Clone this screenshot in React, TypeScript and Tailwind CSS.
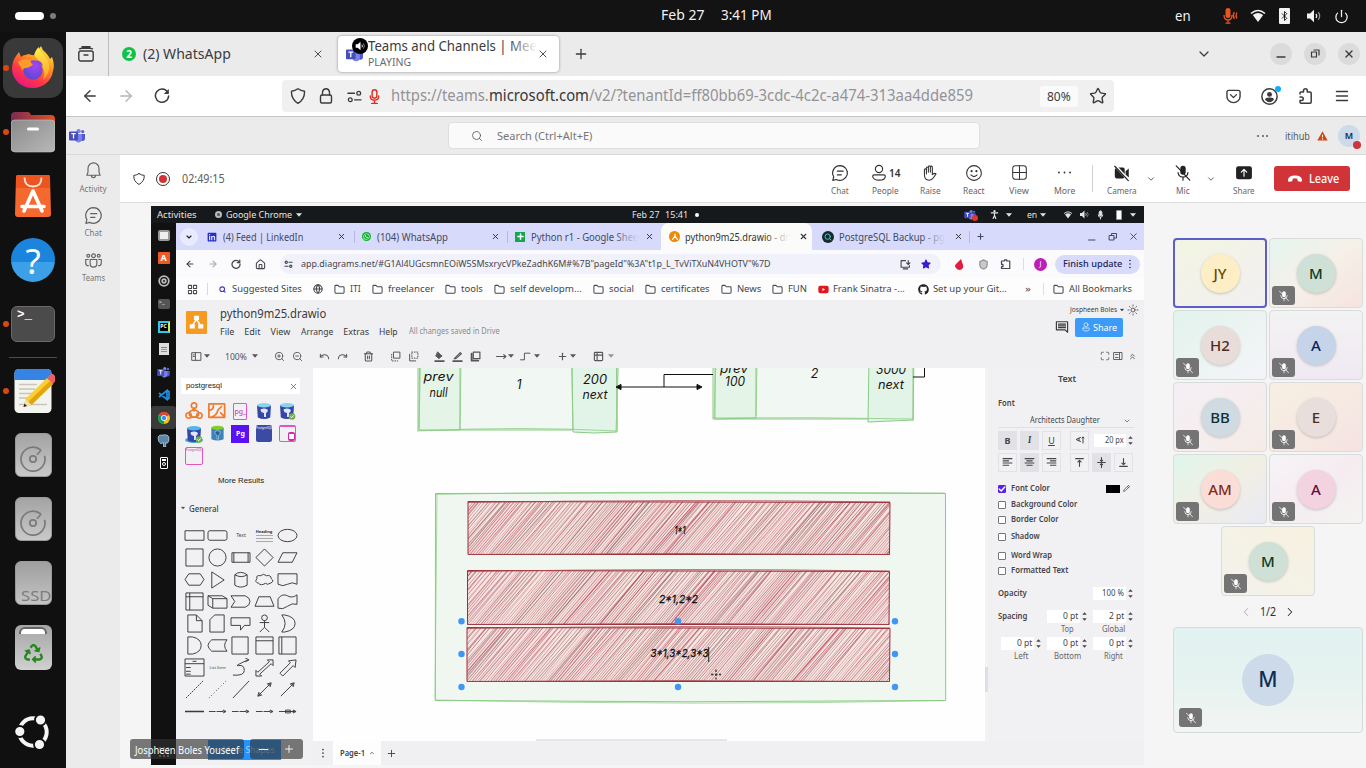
import { useLayoutEffect, useRef, useState, type ReactNode } from "react";
import { X, Plus, ChevronDown, ChevronLeft, ChevronRight, Search, ArrowLeft, ArrowRight, House, Folder, Star, Shield, Power, Bluetooth, Trash2, ZoomIn, ZoomOut, Undo, Redo, Sun, LayoutGrid, Table2, Maximize, ChevronsUp, Pencil, Globe } from "lucide-react";
import { FaLinkedin, FaWhatsapp, FaGithub, FaYoutube, FaRecycle, FaStar } from "react-icons/fa";

/* Text set to an exact width: the glyph run is condensed or widened to fill its box. */
function T({ children, className = "" }: { children: ReactNode; className?: string }) {
  const box = useRef<HTMLSpanElement>(null);
  const run = useRef<HTMLSpanElement>(null);
  const [k, setK] = useState(1);
  useLayoutEffect(() => {
    if (box.current && run.current && run.current.offsetWidth) {
      setK(box.current.getBoundingClientRect().width / run.current.offsetWidth);
    }
  }, []);
  return (
    <span ref={box} className={`block shrink-0 whitespace-nowrap leading-none ${className}`}>
      <span ref={run} className="inline-block origin-left" style={{ transform: `scaleX(${k})` }}>
        {children}
      </span>
    </span>
  );
}

function Ic({ d, className = "", vb = "0 0 20 20", sw = 1.3, children }: { d?: string; className?: string; vb?: string; sw?: number; children?: ReactNode }) {
  return (
    <svg viewBox={vb} className={`shrink-0 ${className}`} fill="none" stroke="currentColor" strokeWidth={sw} strokeLinecap="round" strokeLinejoin="round">
      {d && <path d={d} />}
      {children}
    </svg>
  );
}

function Tri({ className = "" }: { className?: string }) {
  return (
    <svg viewBox="0 0 6 4" className={`h-1 w-1.5 shrink-0 ${className}`}>
      <path d="M0 .3h6L3 3.8z" fill="currentColor" />
    </svg>
  );
}

function Wifi({ className = "" }: { className?: string }) {
  return (
    <svg viewBox="0 0 16 14" className={`shrink-0 ${className}`}>
      <path d="M1 4.5Q8-1.5 15 4.5" fill="none" stroke="currentColor" strokeWidth="1.6" />
      <path d="M2.8 6Q8 2 13.2 6L8 13z" fill="currentColor" />
    </svg>
  );
}

function Speaker({ className = "" }: { className?: string }) {
  return (
    <svg viewBox="0 0 16 14" className={`shrink-0 ${className}`} fill="none" stroke="currentColor">
      <path d="M1 4.5h3L8 .8v12.4L4 9.5H1z" fill="currentColor" stroke="none" />
      <path d="M10 5q1.5 2 0 4" strokeWidth="1.3" />
      <path d="M12.2 3.2q3 3.8 0 7.6" strokeWidth="1.2" opacity=".6" />
    </svg>
  );
}

function TeamsLogo({ className = "" }: { className?: string }) {
  return (
    <svg viewBox="0 0 16 14" className={`shrink-0 ${className}`}>
      <circle cx="13.7" cy="2.6" r="1.6" fill="#5b63cf" />
      <path d="M11 5h5v4.6a2.4 2.4 0 0 1-4 1.8z" fill="#5059c9" />
      <circle cx="9.6" cy="2.2" r="2.1" fill="#7b83eb" />
      <path d="M6 5h7v5a3.6 3.6 0 0 1-7 1z" fill="#7b83eb" />
      <rect y="2.4" width="9" height="9" rx=".8" fill="#464ebb" />
      <path d="M2.3 4.7h4.4M4.5 4.7v4.8" stroke="#fff" strokeWidth="1.2" />
    </svg>
  );
}

function Dock({ dot, children }: { dot?: boolean; children: ReactNode }) {
  return (
    <div className="flex h-16 w-full shrink-0 items-center">
      <span className={`z-10 ml-[2.5px] size-1.5 shrink-0 rounded-full ${dot ? "bg-[#d9480f]" : ""}`} />
      <div className="-ml-[8.5px] flex flex-1 justify-center">{children}</div>
    </div>
  );
}

function Firefox() {
  return (
    <svg viewBox="0 0 44 44" className="size-11">
      <defs>
        <linearGradient id="fx" x1=".85" y1="0" x2=".25" y2="1">
          <stop offset="0" stopColor="#fff44f" />
          <stop offset=".35" stopColor="#ff9a1f" />
          <stop offset=".7" stopColor="#ff3647" />
          <stop offset="1" stopColor="#e31587" />
        </linearGradient>
        <radialGradient id="fp" cx=".6" cy=".3" r=".7">
          <stop offset="0" stopColor="#a545f5" />
          <stop offset="1" stopColor="#5a49cf" />
        </radialGradient>
        <linearGradient id="fy" x1="0" y1="0" x2="0" y2="1">
          <stop offset="0" stopColor="#fff04e" />
          <stop offset="1" stopColor="#ff9f22" />
        </linearGradient>
      </defs>
      <path d="M5 10l3-4 2 5q2-2 4-2l4-1q4 2 8 1 1-5 4-9 1 4 5 7 2 2 4 6l2-2q3 8 1 14a20 20 0 0 1-20 17A20 20 0 0 1 1 24Q1 15 5 10z" fill="url(#fx)" />
      <path d="M23 9q2-6 5-8 1 5 5 8 4 5 5 9 1 10-6 16 3-8-1-14-3-6-8-11z" fill="url(#fy)" />
      <circle cx="22" cy="24" r="9.7" fill="url(#fp)" />
      <path d="M7 16q6-5 13-2-1 3 2 4-2 3-7 4-3 0-4 3-1-4-4-9z" fill="#ff9a2a" />
      <path d="M22 15q8-2 10 5-4-3-7-3z" fill="#8846e2" />
    </svg>
  );
}

function Drive() {
  return (
    <div className="flex h-[44px] w-[37px] items-center justify-center rounded-md border border-[#9a9a9a] bg-linear-to-b from-[#a3a3a3] to-[#c9c9c9] pt-2">
      <svg viewBox="0 0 28 28" className="size-7" fill="none" stroke="#7a7a7a" strokeWidth="1.7">
        <path d="M22 5.2A12 12 0 1 0 25.5 10.7" />
        <path d="M22 5.2l-4 4.5" />
        <circle cx="14" cy="14" r="3.2" />
      </svg>
    </div>
  );
}

function DesktopDock() {
  return (
    <nav className="flex h-full w-[66px] shrink-0 flex-col bg-[#101010] pt-1">
      <Dock dot>
        <div className="flex size-[60px] items-center justify-center rounded-[13px] bg-[#393939]">
          <Firefox />
        </div>
      </Dock>
      <Dock dot>
        <svg viewBox="0 0 44 42" className="h-[42px] w-11">
          <defs>
            <linearGradient id="fo" x1="0" x2="1"><stop stopColor="#7c2a55" /><stop offset="1" stopColor="#e2521f" /></linearGradient>
            <linearGradient id="fg" x1="0" y1="0" x2="1" y2="1"><stop stopColor="#8a8a8a" /><stop offset="1" stopColor="#b8b8b8" /></linearGradient>
          </defs>
          <path d="M0 5Q0 1 4 1h13q2 0 3 3h20q4 0 4 4v12H0z" fill="url(#fo)" />
          <rect y="9" width="44" height="32" rx="4" fill="url(#fg)" stroke="#c4c4c4" strokeWidth=".6" />
          <rect x="16" y="16.5" width="12" height="3" rx="1.5" fill="#fff" />
        </svg>
      </Dock>
      <Dock>
        <svg viewBox="0 0 36 43" className="h-[43px] w-9">
          <path d="M3 0h30q2 0 2 2l1 37q0 3-3 3H3q-3 0-3-3L1 2Q1 0 3 0z" fill="#f5692f" />
          <path d="M3 0h30q2 0 2 2v11H1V2Q1 0 3 0z" fill="#ec5420" />
          <path d="M9.5 2.5q0 9 8.5 9t8.5-9" fill="none" stroke="#ffe3d6" strokeWidth="1.8" />
          <path d="M9 36L18 16l9 20M7 31.5h22" fill="none" stroke="#fff" strokeWidth="3.6" strokeLinecap="round" strokeLinejoin="round" />
        </svg>
      </Dock>
      <Dock>
        <div className="flex size-[44px] items-center justify-center rounded-full bg-linear-to-b from-[#1b84dc] from-55% to-[#3ba0e8] to-55%">
          <span className="text-[35px] leading-none text-white">?</span>
        </div>
      </Dock>
      <Dock dot>
        <div className="h-9 w-[44px] rounded-md border border-[#6a6a6a] bg-[#4b4b4b] pt-px pl-[5px] font-[Liberation_Mono] text-[12.5px] leading-[15px] font-bold text-white">&gt;_</div>
      </Dock>
      <div className="mx-auto mt-px mb-px h-px w-12 shrink-0 bg-[#4c4c4c]" />
      <Dock dot>
        <svg viewBox="0 0 44 46" className="h-[46px] w-11">
          <rect x="3.5" y="1" width="37" height="44" rx="4.5" fill="#f3f3ef" />
          <path d="M3.5 12V5.5Q3.5 1 8 1h28q4.5 0 4.5 4.5V12z" fill="#3584e4" />
          <path d="M8 16.5h18M8 21h16M8 25.5h18M8 30h12M8 36.5h28" stroke="#c9c5b8" strokeWidth="1.5" />
          <path d="M12.5 39l2-8L36 10l6 6-21.5 21z" fill="#f8cf34" />
          <path d="M17 34L39 13l3 3-21.5 21z" fill="#e5a50a" />
          <path d="M36 10l2.5-2.5Q41 4 44 8q3 3 0 5.5L42 16z" fill="#ed5f64" />
          <path d="M12.5 39l2-8 6 6z" fill="#f2dfae" /><path d="M12.5 39l.9-3.5 2.6 2.5z" fill="#222" />
        </svg>
      </Dock>
      <Dock><Drive /></Dock>
      <Dock><Drive /></Dock>
      <Dock>
        <div className="flex h-[44px] w-[37px] items-end justify-end rounded-md border border-[#9a9a9a] bg-linear-to-b from-[#9f9f9f] to-[#c4c4c4] pb-px">
          <T className="w-[30px] text-[15px] text-[#7c7c7c]">SSD</T>
        </div>
      </Dock>
      <Dock>
        <div className="flex h-[45px] w-[37px] flex-col items-center rounded-md bg-linear-to-b from-[#a5a5a5] to-[#d0d0d0] pt-0.5">
          <div className="h-[7px] w-7 rounded-t-md border-2 border-b-0 border-[#666] bg-white" />
          <FaRecycle className="mt-2.5 size-[19px] text-[#26871f]" />
        </div>
      </Dock>
      <div className="mt-[21px]">
        <Dock>
          <svg viewBox="0 0 36 36" className="size-9" fill="none" stroke="#f5f5f5" strokeWidth="4">
            <circle cx="18" cy="18" r="13.7" />
            <g fill="#f5f5f5" stroke="#101010" strokeWidth="1.8">
              <circle cx="4.8" cy="17.5" r="5.5" /><circle cx="25.5" cy="6" r="5.5" /><circle cx="24.5" cy="30.5" r="5.5" />
            </g>
          </svg>
        </Dock>
      </div>
    </nav>
  );
}

function SystemBar() {
  return (
    <header className="flex h-8 shrink-0 items-center bg-[#131313] text-[14px] text-[#f2f2f2]">
      <span className="ml-[15px] h-2 w-[29px] rounded-full bg-white" />
      <span className="ml-1.5 size-1.5 rounded-full bg-[#7d7d7d]" />
      <T className="-mt-0.5 ml-[605px] w-[43px]">Feb 27</T>
      <T className="-mt-0.5 ml-[17px] w-[51px]">3:41 PM</T>
      <T className="ml-[403px] w-4">en</T>
      <svg viewBox="0 0 16 16" className="ml-[31px] size-4" fill="none" stroke="#e95420" strokeWidth="1.3">
        <rect x="3.5" y="0" width="5" height="10" rx="2.5" fill="#e95420" stroke="none" />
        <path d="M2 7q0 5 4 5t4-5M6 12v3M3.5 15.2h5M12.3 4q-2 3.5 0 7M14.8 4.5q-1.5 3 0 6" />
      </svg>
      <Wifi className="ml-[12px] h-[14px] w-4" />
      <span className="ml-[13px] flex h-4 w-[11px] items-center justify-center rounded-[1px] bg-[#f2f2f2] text-black"><Bluetooth className="size-[14px]" strokeWidth={1.8} /></span>
      <Speaker className="ml-[16px] h-[14px] w-4" />
      <Power className="ml-3 size-[15px]" strokeWidth={2} />
    </header>
  );
}

function FirefoxChrome() {
  return (
    <>
      <div className="flex h-11 shrink-0 items-center bg-[#ebebeb] text-[14px] text-[#3b3b3d]">
        <div className="flex h-full w-[43px] items-center justify-center border-r border-[#bdbdbd] pr-0.5">
          <Ic className="size-4" vb="0 0 16 16" sw={1.4}><rect x=".8" y="5" width="14.4" height="10" rx="2" /><path d="M1.5 2.8Q3 2.3 4 2.3h8q1 0 2.5.5M4 .7h8M6 9h4" /></Ic>
        </div>
        <div className="ml-[13px] flex size-[14px] items-center justify-center rounded-full bg-[#0fc144] text-[10px] leading-none font-bold text-white">2</div>
        <T className="-mt-px ml-[7px] w-[88px] text-[15px]">(2) WhatsApp</T>
        <X className="ml-[81px] size-3" strokeWidth={1.8} />
        <div className="ml-[14px] flex h-9 w-[221px] shrink-0 items-center rounded-[4px] bg-white pl-2 shadow-[0_0_3px_rgba(0,0,0,.4)]">
          <div className="relative flex h-full items-center">
            <TeamsLogo className="h-[15px] w-[17px]" />
            <span className="absolute top-[2px] left-[6px] flex size-4 items-center justify-center rounded-full bg-black text-white"><Speaker className="h-2.5 w-[11px]" /></span>
          </div>
          <div className="-mt-0.5 ml-[5px] flex w-[169px] flex-col gap-1 overflow-hidden">
            <div className="relative flex h-[15px] items-center"><T className="w-[169px] text-[15px]">Teams and Channels | Mee</T><span className="absolute inset-y-0 right-0 w-7 bg-linear-to-r from-transparent to-white" /></div>
            <T className="w-[43px] text-[10.5px] text-[#6b6b6e]">PLAYING</T>
          </div>
          <X className="size-3 shrink-0" strokeWidth={1.8} />
        </div>
        <Plus className="ml-[14px] size-4" strokeWidth={1.9} />
        <ChevronDown className="ml-[607px] size-4" strokeWidth={1.9} />
        <span className="ml-[58px] flex size-[22px] items-center justify-center rounded-full bg-[#dbdbdb]"><Ic className="size-3" vb="0 0 12 12" d="M2 9h8" /></span>
        <span className="ml-3 flex size-[22px] items-center justify-center rounded-full bg-[#dbdbdb]"><Ic className="size-3" vb="0 0 12 12" sw={1.2} d="M2.5 4h5v5h-5zM5 2h5v5" /></span>
        <span className="ml-3 flex size-[22px] items-center justify-center rounded-full bg-[#dbdbdb]"><X className="size-3" strokeWidth={2.8} /></span>
      </div>
      <div className="flex h-10 shrink-0 items-center bg-white text-[#3b3b3d]">
        <ArrowLeft className="ml-[15px] size-[18px]" strokeWidth={1.8} />
        <ArrowRight className="ml-[18px] size-[18px] text-[#b5b5b5]" strokeWidth={1.8} />
        <Ic className="ml-[19px] size-4" vb="0 0 16 16" sw={1.5} d="M13.6 4.2A6.6 6.6 0 1 0 14.6 8"><path d="M14.8 1v5h-5z" fill="currentColor" stroke="none" /></Ic>
        <div className="ml-[112px] flex h-8 w-[832px] items-center rounded-[4px] bg-[#f0f0f0]">
          <Ic className="ml-2 size-4" vb="0 0 16 16" sw={1.4} d="M8 .8Q11 3 14.5 3.2 15 11 8 15.3 1 11 1.5 3.2 5 3 8 .8z" />
          <Ic className="ml-3 size-4" vb="0 0 16 16" sw={1.4}><rect x="2.5" y="7" width="11" height="8" rx="1.5" /><path d="M4.5 7V4Q5 .8 8 .8t3.500 3.200v3" /></Ic>
          <Ic className="ml-[13px] size-[15px]" vb="0 0 16 16" sw={1.4}><circle cx="12.5" cy="4.5" r="2" /><circle cx="3.5" cy="11.5" r="2" /><path d="M1 4.5h7M8 11.5h7" /></Ic>
          <Ic className="ml-[5px] size-[15px] text-[#e12b20]" vb="0 0 16 16" sw={1.5}><rect x="5.5" y=".8" width="5" height="9" rx="2.5" /><path d="M3.5 7.5q0 4.5 4.5 4.5t4.5-4.5M8 12v3M5 15.300h6" /></Ic>
          <div className="-mt-0.5 ml-[9px] flex text-[16px] text-[#939397]">
            <T className="w-[98px]">https://teams.</T>
            <T className="w-[100px] text-[#37373a]">microsoft.com</T>
            <T className="w-[384px]">/v2/?tenantId=ff80bb69-3cdc-4c2c-a474-313aa4dde859</T>
          </div>
          <div className="ml-[67px] flex h-[21px] w-[38px] items-center justify-center rounded-[3px] bg-[#fafafa]"><T className="w-6 text-[13px]">80%</T></div>
          <Star className="ml-[11px] size-[18px]" strokeWidth={1.9} />
        </div>
        <Ic className="ml-[112px] size-[15px]" vb="0 0 16 16" sw={1.5} d="M3 1.5h10q2 0 2 2V8a7 6.5 0 0 1-14 0V3.5q0-2 2-2zM4.8 6L8 9.2 11.2 6" />
        <span className="relative ml-5">
          <Ic className="size-[17px]" vb="0 0 16 16" sw={1.4}><circle cx="8" cy="8" r="7.2" /><circle cx="8" cy="6" r="2.3" fill="currentColor" stroke="none" /><path d="M3.800 11Q4 9 8 9t4.200 2Q10 13.400 8 13.400T3.800 11z" fill="currentColor" stroke="none" /></Ic>
          <span className="absolute -top-[2px] -right-[3px] size-1.5 rounded-full bg-[#0ab0ff]" />
        </span>
        <Ic className="ml-5 size-4" vb="0 0 16 16" sw={1.5} d="M2 6V5q0-1 1-1h2.500V2.700a1.900 1.900 0 0 1 3.800 0V4H12q1.200 0 1.200 1.200V14q0 1.200-1.200 1.200H3.200Q2 15.200 2 14v-1.500h1.500a1.700 1.700 0 0 0 0-3.500H2" />
        <Ic className="ml-[21px] size-[14px]" vb="0 0 14 14" sw={1.5} d="M1.500 2.500h11M1.500 7h11M1.500 11.500h11" />
      </div>
    </>
  );
}

function TeamsHeader() {
  return (
    <div className="flex h-[39px] shrink-0 items-center border-t border-b border-t-[#c6c6c6] border-b-[#dadada] bg-[#ebebeb] text-[#5a5a5a]">
      <TeamsLogo className="ml-[3px] h-[14px] w-4" />
      <div className="ml-[363px] flex h-[27px] w-[532px] items-center rounded-[4px] border border-[#dedede] bg-[#fafafa]">
        <Search className="ml-[22px] size-3" strokeWidth={1.7} />
        <T className="ml-[14px] w-[95px] text-[11.5px] text-[#767676]">Search (Ctrl+Alt+E)</T>
      </div>
      <span className="ml-[277px] flex w-[11px] justify-between"><i className="size-[2px] rounded-full bg-current" /><i className="size-[2px] rounded-full bg-current" /><i className="size-[2px] rounded-full bg-current" /></span>
      <T className="ml-[17px] w-[25px] text-[11px]">itihub</T>
      <svg viewBox="0 0 12 11" className="ml-[7px] h-[10px] w-[11px]"><path d="M6 .3l5.7 10.2H.3z" fill="#cf4a12" /><path d="M6 4v3M6 8v1.3" stroke="#fff" strokeWidth="1.2" /></svg>
      <span className="relative ml-[10px] flex size-[22px] items-center justify-center rounded-full bg-[#cddaea] text-[9px] font-semibold text-[#13294b]">M<i className="absolute -right-px -bottom-[2px] size-2 rounded-full bg-[#d13438]" /></span>
    </div>
  );
}

function PeopleIcon({ className = "" }: { className?: string }) {
  return <Ic className={className}><circle cx="10" cy="5.5" r="4" /><path d="M4.5 12h11q1.500 0 1.500 1.500c0 6-14 6-14 0Q3 12 4.500 12z" /></Ic>;
}
function ChatIcon({ className = "" }: { className?: string }) {
  return <Ic className={className} d="M10 1.8A8.2 8.2 0 1 1 6 17.2L2 18.2l1-4A8.2 8.2 0 0 1 10 1.8zM7 8h6.5M7 12h4.5" />;
}

function Rail() {
  return (
    <aside className="flex w-[54px] shrink-0 flex-col items-center bg-[#ebebeb] text-[#616161]">
      <Ic className="mt-[6px] size-[19px]" sw={1.2} d="M10 2a5.800 5.800 0 0 0-5.800 5.800V12L3 15h14l-1.200-3V7.800A5.800 5.800 0 0 0 10 2zM7.800 15.300a2.200 2.200 0 0 0 4.400 0" />
      <T className="mt-[5px] w-[27px] text-[8px] text-[#777]">Activity</T>
      <ChatIcon className="mt-[13px] size-[19px]" />
      <T className="mt-[4px] w-[17px] text-[8px] text-[#777]">Chat</T>
      <Ic className="mt-[14px] size-[19px]" sw={1.2}><circle cx="10" cy="5" r="2" /><circle cx="4.5" cy="5" r="1.5" /><circle cx="15.5" cy="5" r="1.5" /><path d="M6.500 9h7v4.500a3.500 3.500 0 0 1-7 0zM4.500 9H1.800v3.500q0 3 3 3M15.500 9h2.700v3.500q0 3-3 3" /></Ic>
      <T className="mt-[4px] w-[23px] text-[8px] text-[#777]">Teams</T>
    </aside>
  );
}

function MicOff({ className = "" }: { className?: string }) {
  return (
    <Ic className={className} sw={1.3}>
      <rect x="7" y="2" width="6" height="10" rx="3" fill="currentColor" stroke="none" />
      <path d="M4.5 9.5q.5 5 5.5 5t5.500-5M10 14.500v3.500M2.500 2l15 16" />
    </Ic>
  );
}

function Tool({ icon, label, w, ml = "" }: { icon: ReactNode; label: string; w: string; ml?: string }) {
  return (
    <div className={`flex w-[38px] shrink-0 flex-col items-center gap-[4px] pt-[2px] ${ml}`}>
      <div className="flex h-[18px] items-center">{icon}</div>
      <T className={`text-[9.5px] text-[#666] ${w}`}>{label}</T>
    </div>
  );
}

function MeetingBar() {
  return (
    <div className="flex h-[48px] shrink-0 items-center border-b border-[#dcdcdc] bg-white text-[#333]">
      <Ic className="ml-[13px] size-3" vb="0 0 16 16" d="M8 .8Q11 3 15 3.2 15.500 11 8 15.300.500 11 1 3.200 5 3 8 .8z" />
      <span className="ml-[11px] flex size-[14px] items-center justify-center rounded-full border border-[#333]"><i className="size-2 rounded-full bg-[#d13438]" /></span>
      <T className="ml-[12px] w-[43px] text-[12px] text-[#606060]">02:49:15</T>
      <Tool ml="ml-[596px]" icon={<ChatIcon className="size-[18px]" />} label="Chat" w="w-[18px]" />
      <Tool ml="ml-[7px]" icon={<><PeopleIcon className="size-[18px]" /><T className="ml-px w-[11px] text-[10px] font-semibold">14</T></>} label="People" w="w-[27px]" />
      <Tool ml="ml-[7px]" icon={<Ic className="size-[18px]" sw={1.2} d="M6 11V4.500a1.100 1.100 0 0 1 2.200 0V9M8.200 9V3a1.100 1.100 0 0 1 2.200 0v6M10.400 9V3.500a1.100 1.100 0 0 1 2.200 0V10M6 9.500V6.500a1.100 1.100 0 0 0-2.200 0V12q0 6 5.200 6 3.200 0 5-3l2.700-4q-1.500-1.500-4.100.8V5.500" />} label="Raise" w="w-[21px]" />
      <Tool ml="ml-[6px]" icon={<Ic className="size-[18px]" sw={1.2}><circle cx="10" cy="10" r="8.2" /><path d="M6.5 12.2q3.500 3.500 7 0" /><circle cx="7.3" cy="8" r=".6" fill="currentColor" /><circle cx="12.7" cy="8" r=".6" fill="currentColor" /></Ic>} label="React" w="w-[22px]" />
      <Tool ml="ml-[7px]" icon={<Ic className="size-[17px]" sw={1.2}><rect x="2" y="2" width="16" height="16" rx="3" /><path d="M10 2v16M2 10h16" /></Ic>} label="View" w="w-[20px]" />
      <Tool ml="ml-[7px]" icon={<Ic className="size-[17px]" sw={2.2} d="M3.500 10h.01M10 10h.01M16.500 10h.01" />} label="More" w="w-[21px]" />
      <span className="ml-[9px] h-[27px] w-px bg-[#cfcfcf]" />
      <Tool ml="ml-[10px]" icon={<Ic className="size-[18px] text-[#222]"><path d="M3.500 4H11q2 0 2 2v8q0 2-2 2H4q-2 0-2-2V6zM14 8l3.500-3v10L14 12z" fill="currentColor" stroke="none" /><path d="M2.500 2l15 16" stroke="#fff" strokeWidth="3" /><path d="M2 2.500l15 16" /></Ic>} label="Camera" w="w-[30px]" />
      <ChevronDown className="ml-[5px] size-[10px]" strokeWidth={1.8} />
      <Tool ml="ml-[8px]" icon={<MicOff className="size-[18px] text-[#222]" />} label="Mic" w="w-[14px]" />
      <ChevronDown className="ml-[4px] size-[10px]" strokeWidth={1.8} />
      <Tool ml="ml-[9px]" icon={<Ic className="size-[18px] text-[#222]"><rect x="1.2" y="2.5" width="17.6" height="14.5" rx="2.5" fill="currentColor" stroke="none" /><path d="M10 13.500v-7M7 9l3-3 3 3" stroke="#fff" /></Ic>} label="Share" w="w-[22px]" />
      <div className="ml-[11px] flex h-[25px] w-[76px] items-center rounded-[3px] bg-[#d13438] text-white">
        <svg viewBox="0 0 18 8" className="ml-[13px] h-[7px] w-4"><path d="M1 6Q1 .5 9 .5T17 6q0 2-1.500 1.700L12.500 7Q11.500 6.700 11.800 4.300 9 3.300 6.200 4.300 6.500 6.700 5.500 7l-3 .7Q1 8 1 6z" fill="currentColor" /></svg>
        <T className="ml-[6px] w-[30px] text-[12px] font-medium">Leave</T>
      </div>
    </div>
  );
}

/* ---------- shared screen ---------- */

function SharedDock() {
  const slot = "flex h-[22.8px] w-full shrink-0 items-center justify-center";
  return (
    <div className="flex w-[25px] shrink-0 flex-col bg-[#111] pt-px text-white">
      <div className={slot}><i className="h-[11px] w-3 rounded-[2px] border-2 border-[#999] bg-[#eee]" /></div>
      <div className={slot}><i className="flex size-3 items-center justify-center rounded-[1px] bg-[#ee5a24] text-[9px] font-bold not-italic">A</i></div>
      <div className={slot}><Ic className="size-3 text-[#bbb]" sw={3}><circle cx="10" cy="10" r="8" /><circle cx="10" cy="10" r="3" /></Ic></div>
      <div className={slot}><i className="h-[10px] w-3 rounded-[2px] bg-[#555] pl-px text-[6px] leading-[7px] not-italic">&gt;_</i></div>
      <div className={slot}><i className="flex size-3 items-center justify-center border-2 border-[#2bcbe8] border-r-[#c7ec54] bg-black text-[5px] font-bold not-italic">PC</i></div>
      <div className={slot}><i className="flex h-3 w-2.5 flex-col justify-center gap-px bg-[#ddd] px-0.5"><b className="h-px bg-[#b66]" /><b className="h-px bg-[#999]" /><b className="h-px bg-[#69c]" /></i></div>
      <div className={slot}><TeamsLogo className="h-[11px] w-[13px]" /></div>
      <div className={slot}><svg viewBox="0 0 12 12" className="size-3" fill="none" stroke="#1f8fe0" strokeWidth="1.7"><path d="M1 4l8 6.500v-9L1 8M9 1.500l2 1v7l-2 1" /></svg></div>
      <div className={`${slot} rounded-[3px] bg-[#3a3a3a]`}>
        <svg viewBox="0 0 12 12" className="size-3"><circle cx="6" cy="6" r="6" fill="#f4c20d" /><path d="M6 6L.8 3A6 6 0 0 1 11.200 3z" fill="#db4437" /><path d="M6 6L.8 3A6 6 0 0 0 6 12z" fill="#0f9d58" /><circle cx="6" cy="6" r="2.7" fill="#4285f4" stroke="#fff" strokeWidth=".8" /></svg>
      </div>
      <div className={slot}><svg viewBox="0 0 12 12" className="size-[13px]"><path d="M1 4Q1 .5 5 1q5-1 6 2 .5 4-1.500 5.500L8 8v4H6V8L3.500 9Q1 7 1 4z" fill="#5b87ad" stroke="#dce6ee" strokeWidth=".6" /></svg></div>
      <div className={slot}><i className="flex h-3 w-2 flex-col items-center gap-px rounded-[1px] border border-white pt-px"><b className="h-0.5 w-1 bg-white" /><b className="size-1 rounded-full border border-white" /></i></div>
      <div className="mt-auto mb-2 grid grid-cols-3 gap-0.5 self-center">
        {Array.from({ length: 9 }, (_, i) => <i key={i} className="size-[2px] bg-[#999]" />)}
      </div>
    </div>
  );
}

function SharedTopBar() {
  return (
    <div className="flex h-[17px] shrink-0 items-center bg-[#15191b] text-[9.5px] text-[#e4e4e4]">
      <T className="ml-[6px] w-10">Activities</T>
      <i className="ml-[18px] flex size-[7px] items-center justify-center rounded-full bg-[#bbb]"><b className="size-[3px] rounded-full bg-[#555]" /></i>
      <T className="ml-1 w-[66px]">Google Chrome</T>
      <Tri className="ml-1" />
      <T className="ml-[330px] w-[27px]">Feb 27</T>
      <T className="ml-[6px] w-[23px]">15:41</T>
      <i className="ml-[7px] size-1 rounded-full bg-white" />
      <span className="relative ml-[265px]"><TeamsLogo className="h-2.5 w-3" /><i className="absolute -right-0.5 -bottom-px size-1.5 rounded-full bg-[#e4342c]" /></span>
      <Ic className="ml-[14px] size-[9px]" sw={2.6}><circle cx="10" cy="2.5" r="1.2" fill="currentColor" /><path d="M3 6.500h14M10 6.500v6M7 19l3-7 3 7" /></Ic>
      <Tri className="ml-[7px]" />
      <T className="ml-[15px] w-2.5">en</T>
      <Tri className="ml-[3px]" />
      <Wifi className="ml-[17px] h-2 w-2.5" />
      <Speaker className="ml-[6px] h-[9px] w-[11px]" />
      <Ic className="ml-[6px] h-2.5 w-[9px]" sw={2}><rect x="7" y="1" width="6" height="11" rx="3" fill="currentColor" /><path d="M5 10q0 5 5 5t5-5M10 15v4" /></Ic>
      <i className="ml-[11px] h-2.5 w-[6px] rounded-[1px] border border-[#999] bg-white" />
      <Tri className="ml-[8px]" />
    </div>
  );
}

function SharedTabs() {
  const x = "size-[9px] shrink-0 text-[#333]";
  return (
    <div className="flex h-[27px] shrink-0 items-center bg-[#d7dafb] text-[10px] text-[#444960]">
      <span className="ml-[4px] flex size-[18px] shrink-0 items-center justify-center rounded-full bg-[#e8eafd] text-[#222]"><ChevronDown className="size-2" strokeWidth={3.5} /></span>
      <FaLinkedin className="ml-[9px] size-[10px] shrink-0 text-[#2230c8]" />
      <T className="ml-[6px] w-[80px]">(4) Feed | LinkedIn</T>
      <X className={`ml-[34px] ${x}`} strokeWidth={2.5} />
      <i className="ml-[8px] h-3 w-px bg-[#b6b9dc]" />
      <span className="ml-[7px] flex size-[9px] shrink-0 items-center justify-center rounded-full bg-[#0cb32c] text-white"><FaWhatsapp className="size-[7px]" /></span>
      <T className="ml-[6px] w-[71px]">(104) WhatsApp</T>
      <X className={`ml-[43px] ${x}`} strokeWidth={2.5} />
      <i className="ml-[7px] h-3 w-px bg-[#b6b9dc]" />
      <span className="ml-[7px] flex size-[10px] shrink-0 items-center justify-center bg-[#12a84b] text-white"><Plus className="size-[9px]" strokeWidth={4} /></span>
      <span className="relative ml-[6px]"><T className="w-[107px]">Python r1 - Google Shee</T><i className="absolute -inset-y-1 right-0 w-6 bg-linear-to-r from-transparent to-[#d7dafb]" /></span>
      <X className={`ml-[7px] ${x}`} strokeWidth={2.5} />
      <div className="ml-[7px] flex h-[27px] w-[151px] shrink-0 items-center rounded-t-lg bg-[#fbfcfa] text-[#333]">
        <span className="ml-[8px] flex size-[11px] shrink-0 items-center justify-center rounded-full bg-[#f08705] text-white"><Ic className="size-2" sw={3} d="M10 3v5M10 8l-6 8M10 8l6 8" /></span>
        <span className="relative ml-[5px]"><T className="w-[104px]">python9m25.drawio - dr</T><i className="absolute -inset-y-1 right-0 w-6 bg-linear-to-r from-transparent to-[#fbfcfa]" /></span>
        <X className={`ml-[10px] ${x}`} strokeWidth={3} />
      </div>
      <span className="ml-[10px] flex size-3 shrink-0 items-center justify-center rounded-full bg-[#18292b]"><Search className="size-2 text-[#4ec3c3]" strokeWidth={3} /></span>
      <span className="relative ml-[5px]"><T className="w-[106px]">PostgreSQL Backup - pg</T><i className="absolute -inset-y-1 right-0 w-6 bg-linear-to-r from-transparent to-[#d7dafb]" /></span>
      <X className={`ml-[9px] ${x}`} strokeWidth={2.5} />
      <i className="ml-[6px] h-3 w-px bg-[#b6b9dc]" />
      <Plus className="ml-[6px] size-[9px]" strokeWidth={3} />
      <Ic className="ml-[102px] size-2.5" sw={2} d="M3 16h13" />
      <Ic className="ml-[11px] size-2.5" sw={2} d="M3 7h9v9H3zM7 7V3h10v9h-5" />
      <X className="ml-[10px] size-[11px]" strokeWidth={2} />
    </div>
  );
}

function SharedAddress() {
  return (
    <div className="flex h-[28px] shrink-0 items-center bg-[#fbfbfe] text-[#45464c]">
      <ArrowLeft className="ml-[9px] size-[10px]" strokeWidth={2.6} />
      <ArrowRight className="ml-[13px] size-[10px] text-[#aaa]" strokeWidth={2.6} />
      <Ic className="ml-[13px] size-[10px]" sw={2.5} d="M16.500 6A8 8 0 1 0 18 10M17.500 2v5h-5" />
      <House className="ml-[14px] size-[11px]" strokeWidth={2.3} />
      <div className="ml-[14px] flex h-5 w-[661px] shrink-0 items-center rounded-full bg-[#f0f1fb]">
        <Ic className="ml-[4px] size-[9px]" sw={2.5}><circle cx="5" cy="5" r="2.5" /><circle cx="15" cy="14" r="2.5" /><path d="M11 5h7M2 14h7" /></Ic>
        <T className="ml-[8px] w-[470px] text-[9.5px]">app.diagrams.net/#G1Al4UGcsmnEOiW5SMsxrycVPkeZadhK6M#%7B"pageId"%3A"t1p_L_TvViTXuN4VHOTV"%7D</T>
        <Ic className="ml-[129px] size-[11px]" sw={2} d="M10 3H2v12h15v-3M6 18h8M15 3v6M12 7l3 3 3-3" />
        <FaStar className="ml-[10px] size-[10px] text-[#3a1bd1]" />
      </div>
      <svg viewBox="0 0 10 11" className="ml-[13px] h-[11px] w-2.5"><path d="M7 0L2 5Q0 7 2 9q1 2 4 2 4-1 3-5z" fill="#e21b3f" /></svg>
      <Shield className="ml-[14px] size-[11px] fill-[#c9c9c9] text-[#8f8f8f]" strokeWidth={2.5} />
      <Ic className="ml-[11px] size-[12px]" vb="0 0 16 16" sw={1.6} d="M2 6V4h4V2.500h3V4h4v10H2v-2.500h2v-3H2z" />
      <i className="ml-[11px] h-3 w-px bg-[#dcdcf0]" />
      <span className="ml-[10px] flex size-[13px] items-center justify-center rounded-full bg-[#bb1fb5] text-[7px] text-white">J</span>
      <div className="ml-[8px] flex h-[19px] w-[85px] shrink-0 items-center rounded-full bg-[#d9dbfc] text-[#22245a]">
        <T className="ml-[8px] w-[59px] text-[9.5px] font-medium">Finish update</T>
        <Ic className="ml-[3px] size-[10px]" sw={3.2} d="M10 3h.01M10 10h.01M10 17h.01" />
      </div>
    </div>
  );
}

function Bookmarks() {
  const folders: [string, string][] = [["ITI", "w-[11px]"], ["freelancer", "w-[46px]"], ["tools", "w-[22px]"], ["self developm…", "w-[72px]"], ["social", "w-[25px]"], ["certificates", "w-[49px]"], ["News", "w-6"], ["FUN", "w-[19px]"]];
  return (
    <div className="flex h-[22px] shrink-0 items-center bg-[#fdfdfe] text-[9.5px] text-[#45464c]">
      <LayoutGrid className="ml-[11px] size-[11px]" strokeWidth={2.2} />
      <i className="ml-[9px] h-3 w-px bg-[#d5d6f3]" />
      <Search className="ml-[11px] size-[7px] text-[#4438c9]" strokeWidth={3.5} />
      <T className="ml-[6px] w-[70px]">Suggested Sites</T>
      <Globe className="ml-[11px] size-[10px]" strokeWidth={2.6} />
      {folders.map(([n, w]) => (
        <span key={n} className="ml-[11.3px] flex items-center gap-[4.7px]"><Folder className="size-[11px]" strokeWidth={2.2} /><T className={w}>{n}</T></span>
      ))}
      <FaYoutube className="ml-[11px] size-[11px] text-[#e8141c]" />
      <T className="ml-[4px] w-[72px]">Frank Sinatra -…</T>
      <FaGithub className="ml-[13px] size-[11px] text-[#222]" />
      <T className="ml-[4px] w-[74px]">Set up your Git…</T>
      <T className="ml-[18px] w-[6px]">»</T>
      <i className="ml-[12px] h-3 w-px bg-[#dcdcf0]" />
      <Folder className="ml-[9px] size-[11px]" strokeWidth={2.2} />
      <T className="ml-[5px] w-[63px]">All Bookmarks</T>
    </div>
  );
}

function DrawioHeader() {
  const menus: [string, string][] = [["File", "w-[14px]"], ["Edit", "w-[16px]"], ["View", "w-[20px]"], ["Arrange", "w-[32px]"], ["Extras", "w-[26px]"], ["Help", "w-[19px]"]];
  const i = "size-[11px] shrink-0";
  return (
    <div className="flex h-[68px] shrink-0 flex-col bg-[#f0f0f2] text-[#3b3b3f]">
      <div className="flex h-[44px] items-center">
        <div className="ml-[10px] flex h-[23px] w-[21px] items-center justify-center rounded-[1px] bg-[#f79a20] text-white">
          <svg viewBox="0 0 20 20" className="size-[17px]"><path d="M10 6L5 14M10 6l5 8" stroke="#fff" strokeWidth="1.8" /><path d="M7 2h6v5H7zM2 12h6v5H2zM12 12h6v5h-6z" fill="#fff" /></svg>
        </div>
        <div className="ml-[13px] flex flex-col gap-[7px]">
          <T className="w-[106px] text-[12px]">python9m25.drawio</T>
          <div className="flex gap-[10.3px] text-[9px]">
            {menus.map(([m, w]) => <T key={m} className={w}>{m}</T>)}
            <T className="w-[91px] text-[8px] leading-[9px] text-[#8a8a8e]">All changes saved in Drive</T>
          </div>
        </div>
        <div className="mr-[5px] ml-auto flex flex-col items-end gap-[2px] pb-1">
          <div className="flex h-3 items-center"><T className="w-[47px] text-[7px]">Jospheen Boles</T><Tri className="mx-[2px] scale-75" /><Sun className="size-3" strokeWidth={1.6} /></div>
          <div className="flex items-center pr-[16px]">
            <Ic className="size-[14px]" sw={1.7} d="M2 2.500h16v15L14.500 14H2zM5 6h10M5 8.500h10M5 11h10" />
            <div className="ml-[6px] flex h-[19px] w-12 items-center justify-center gap-[2px] rounded-[2px] bg-[#3c9bf8] text-white"><PeopleIcon className="size-[10px]" /><T className="w-[24px] text-[9px]">Share</T></div>
          </div>
        </div>
      </div>
      <div className="flex h-6 items-center text-[#55565a]">
        <Ic className={`ml-[15px] ${i}`} sw={1.8} d="M2 3h16v14H2zM8 3v14M4 7h2M4 10h2" />
        <Tri className="ml-[2px]" />
        <T className="ml-[15px] w-[22px] text-[9px]">100%</T>
        <Tri className="ml-[5px]" />
        <ZoomIn className={`ml-[16px] ${i}`} /><ZoomOut className={`ml-[7px] ${i}`} />
        <Undo className={`ml-[16px] ${i}`} strokeWidth={2.3} /><Redo className={`ml-[7px] ${i}`} strokeWidth={2.3} />
        <Trash2 className={`ml-[15px] ${i}`} strokeWidth={2.3} />
        <Ic className={`ml-[16px] ${i}`} sw={1.8}><path d="M7 2h11v11H7z" /><path d="M3 6v12h11" strokeDasharray="1.5 3" /></Ic>
        <Ic className={`ml-[7px] ${i}`} sw={1.8}><path d="M7 2h11v11H7z" strokeDasharray="1.5 3" /><path d="M3 6v12h11" /></Ic>
        <Ic className={`ml-[15px] ${i}`} sw={1.8}><path d="M7 2l7 7-5 5-5-5zM4 9h10z" fill="currentColor" /><path d="M2 18.500h16" strokeWidth="3" /></Ic>
        <Ic className={`ml-[7px] ${i}`} sw={2}><path d="M4 14L15 3l2 2L7 14z" /><path d="M2 18.500h16" strokeWidth="3" /></Ic>
        <Ic className={`ml-[7px] ${i}`} sw={2.2}><path d="M6 2h12v12H6z" /><path d="M3 5v12.500h12" strokeWidth="3.5" /></Ic>
        <Ic className={`ml-[15px] ${i}`} sw={2} d="M1 10h17M14 6.500l4 3.500-4 3.500" /><Tri className="ml-px" />
        <Ic className={`ml-[6px] ${i}`} sw={1.8} d="M1 16h7V4h10" /><Tri className="ml-[3px]" />
        <Plus className={`ml-[17px] ${i}`} strokeWidth={2.5} /><Tri className="ml-[2px]" />
        <Table2 className={`ml-[17px] ${i}`} strokeWidth={2.5} /><Tri className="ml-[4px] opacity-60" />
        <Maximize className="ml-auto size-[10px]" strokeWidth={2} />
        <Ic className="ml-[3px] size-[10px]" sw={1.8} d="M2 3h16v14H2zM13 3v14M5 7h5M5 13h5" />
        <ChevronsUp className="mr-[7px] ml-[5px] size-[9px]" strokeWidth={2.5} />
      </div>
    </div>
  );
}

const SHAPES: string[] = [
  "M1 5h20v10H1z", "M3 5h16q2 0 2 2v6q0 2-2 2H3q-2 0-2-2V7q0-2 2-2z", "", "", "M1 10a10 6.5 0 1 0 20 0a10 6.5 0 1 0-20 0",
  "M2 1h18v18H2z", "M2 10a9 9 0 1 0 18 0a9 9 0 1 0-18 0", "M2 5h19v10H2zM4 5v10M19 5v10", "M11 1l9 9-9 9-9-9z", "M6 5h15l-5 10H1z",
  "M5 4h12l4 6-4 6H5l-4-6z", "M5 2v17l13-8.5z", "M5 5v11q6 4 13 0V5M5 5q6-5 13 0q-6 4-13 0", "M5 14q-5-1-2-5-1-4 4-3 3-3 6 0 5-1 5 3 4 3-1 5-3 2-5 0-5 3-7 0z", "M1 4h20v11q-5-3-10 0t-10 0z",
  "M2 1h18v18H2zM2 5h18M6 1v18", "M1 4h15l5 3v10H6l-5-3zM1 4l5 3h15M6 7v10", "M1 4h15q5 2 5 6t-5 6H1l4-6z", "M5 5h12l4 10H1z", "M1 7q5-6 10-3t10-1v10q-5-2-10 2t-10 2z",
  "M4 1h9l6 6v12H4zM13 1v6h6", "M8 1h10v18H3V6z", "M1 4h20v8h-6l-4 5v-5H1z", "M8 4a3 3 0 1 0 6 0a3 3 0 1 0-6 0M11 7v7M6 9h10M11 14l-5 5M11 14l5 5", "M5 1h3q11 2 11 9t-11 9H5q7-9 0-18z",
  "M4 1h5q9 2 9 9t-9 9H4z", "M5 4h16q-5 6 0 12H5Q-3 10 5 4z", "M2 1h17v18H2z", "M2 1h18v18H2zM2 5h18", "M2 1h18v18H2zM5 1v18",
  "M1 1h20v18H1zM1 6h20M2 10h5M2 14h5M2 17h5M9 3.5h4", "", "M3 18q12 1 12-5T9 8t10-6M16 0l4 2-4 2", "M2 19v-6l2 2L16 4l-2-2h6v6l-2-2L6 17l2 2z", "M3 16L14 5l-2-2 8-1-1 8-2-2L6 19z",
  "M2 19L20 1", "M2 19L20 1", "M3 19L20 1", "M4 17L18 3M4 17l1-4 3 3zM18 3l-1 4-3-3z", "M4 17L18 3M18 3l-1 4-3-3z",
  "M1 10h20", "M2 10h17M17 8.5l3 1.5-3 1.5z", "M2 10h17M17 8.5l3 1.5-3 1.5z", "M2 10h17M17 8.5l3 1.5-3 1.5z", "M2 10h17M9 8.5h5v3H9zM17 8.5l3 1.5-3 1.5z",
];

function ShapeCell({ d, i }: { d: string; i: number }) {
  if (i === 2) return <span className="flex items-center justify-center text-[5px] text-[#444]">Text</span>;
  if (i === 3) return <span className="flex flex-col justify-center gap-[2px] px-[3px]"><b className="text-[4px] leading-[3px] text-[#333]">Heading</b><i className="h-px bg-[#aaa]" /><i className="h-px bg-[#aaa]" /><i className="h-px bg-[#aaa]" /></span>;
  if (i === 31) return <span className="flex items-center justify-center text-[4px] text-[#444]">List Item</span>;
  return (
    <span className="flex items-center justify-center">
      <svg viewBox="0 0 22 20" className="h-[19px] w-[21px]" fill="none" stroke="#3a3a3c" strokeWidth={i === 40 ? 1.6 : 1} strokeDasharray={i === 35 ? "2 1" : i === 36 ? "1 2.5" : i > 40 && i < 44 ? "7 1" : undefined}><path d={d} /></svg>
    </span>
  );
}

function PgCyl({ top, check, flat }: { top: string; check?: boolean; flat?: boolean }) {
  return (
    <svg viewBox="0 0 18 18" className="size-[18px]">
      {flat && <ellipse cx="9" cy="15" rx="9" ry="3" fill="#3da5dd" />}
      <path d="M2 3h14l-.8 12.500q-6 3-12.400 0z" fill="#3446a8" />
      <ellipse cx="9" cy="3.200" rx="7" ry="2.200" fill={top} />
      <path d="M5.500 7.500q3.500-2 7 0 1 2-1.500 3.500V15H9v-4Q5.500 10.500 5.500 7.500z" fill="#dfe6ff" />
      {check && <g><circle cx="14" cy="14.500" r="3.300" fill="#6fae47" /><path d="M12.400 14.500l1.300 1.200 2-2.300" fill="none" stroke="#fff" /></g>}
    </svg>
  );
}

function Sidebar() {
  const c = "flex h-[22.5px] items-center justify-center";
  return (
    <div className="flex w-[137px] shrink-0 flex-col bg-[#f1f1f3] pt-[10px]">
      <div className="ml-[5px] flex h-[16px] w-[119px] shrink-0 items-center bg-white"><T className="ml-[5px] w-[36px] font-[Liberation_Sans] text-[8px] text-[#222]">postgresql</T><X className="ml-[67px] size-[9px] text-[#555]" strokeWidth={2} /></div>
      <div className="mt-[6px] ml-[6px] grid w-[117px] shrink-0 grid-cols-5">
        <span className={c}><Ic className="size-[18px] text-[#ef7b2c]" sw={1.8}><circle cx="10" cy="4" r="3" /><circle cx="4" cy="15" r="3" /><circle cx="16" cy="15" r="3" /><path d="M10 7v3M10 8l5 3v4l-5 2-5-2v-4zM7 17h6" /></Ic></span>
        <span className={c}><Ic className="size-[18px] text-[#ef7b2c]" sw={1.9} d="M1 2h17.500v15H1zM6 4Q6 9 2 9M3 17q7-2 8-8l4-4M14 12l4 4" /></span>
        <span className={c}><span className="flex h-[17px] w-[14px] items-center rounded-[1px] border border-[#e055c0] text-[7px] leading-none text-[#d12ba9]">pg_</span></span>
        <span className={c}><PgCyl top="#8ad3ef" /></span>
        <span className={c}><PgCyl top="#8ad3ef" check /></span>
        <span className={c}><PgCyl top="#4fb8e8" check flat /></span>
        <span className={c}><svg viewBox="0 0 18 18" className="size-[17px]"><path d="M2.500 3h13v12q-6.500 3-13 0z" fill="#3d83bb" /><ellipse cx="9" cy="3" rx="6.5" ry="2.2" fill="#7fd11c" /><path d="M6 7q3-2 6 0 0 3-2 4v4H8.500v-4Q6 10 6 7z" fill="#2a5f90" stroke="#b9d5ec" strokeWidth=".7" /></svg></span>
        <span className={c}><span className="flex size-[18px] items-center justify-center bg-[#5a12f5] text-[7px] font-bold text-white">Pg</span></span>
        <span className={c}><span className="h-[17px] w-[16px] rounded-[2px] bg-[#3b4ba4] pt-[2px] text-center text-[3px] leading-[3px] text-white">PostgreSQL</span></span>
        <span className={c}><span className="flex size-[17px] items-end justify-end rounded-[2px] border border-t-2 border-[#e055c0]"><i className="h-[9px] w-[7px] rounded-[2px] border border-t-2 border-b-2 border-[#d12ba9] bg-white" /></span></span>
        <span className={c}><span className="size-[18px] rounded-[2px] border border-[#e055c0] pt-px text-center text-[3px] leading-[3px] text-[#d12ba9]">PostgreSQL</span></span>
      </div>
      <T className="mt-[9px] ml-[42px] w-[46px] font-[Liberation_Sans] text-[8px] text-[#222]">More Results</T>
      <div className="mt-[19px] ml-[4px] flex items-center"><Tri className="scale-75 text-[#555]" /><T className="ml-[3px] w-[30px] text-[9px] font-medium text-[#444]">General</T></div>
      <div className="mt-[12px] ml-[6.5px] grid w-[117px] shrink-0 auto-rows-[22px] grid-cols-5">
        {SHAPES.map((d, i) => <ShapeCell key={i} d={d} i={i} />)}
      </div>
      <div className="mt-[17px] ml-[32px] flex h-5 w-[73px] shrink-0 items-center justify-center bg-[#2394ff]"><T className="w-[60px] text-[9px] text-white/60">+ More Shapes</T></div>
    </div>
  );
}

function hatch(x: number, y: number, w: number, h: number, seed: number) {
  let s = seed;
  const rnd = () => (s = (s * 16807) % 2147483647) / 2147483647;
  const out: ReactNode[] = [];
  const palette = ["#b8525e", "#c9747d", "#9c6d70", "#cf959a", "#b07f80"];
  const run = h * 0.85;
  for (let p = x - run; p < x + w; p += 2.3 + rnd() * 0.6) {
    out.push(<line key={p} x1={p} y1={y + h} x2={p + run + rnd() * 3 - 1.5} y2={y} stroke={palette[Math.floor(rnd() * 5)]} strokeWidth={0.7 + rnd() * 0.5} opacity={0.6 + rnd() * 0.3} />);
  }
  return out;
}

function RedBar({ x, y, w, h, id }: { x: number; y: number; w: number; h: number; id: string }) {
  return (
    <g>
      <clipPath id={id}><rect x={x} y={y} width={w} height={h} /></clipPath>
      <rect x={x} y={y} width={w} height={h} fill="#f8e8e5" />
      <g clipPath={`url(#${id})`}>{hatch(x, y, w, h, Math.round(x * y))}</g>
      <path d={`M${x} ${y}L${x + w} ${y + 1}L${x + w - 0.5} ${y + h}L${x} ${y + h}z`} fill="none" stroke="#9e2f3a" />
      <path d={`M${x} ${y + 1}Q${x + w / 2} ${y - 2.5} ${x + w} ${y + 0.5}M${x} ${y + h}Q${x + w / 2} ${y + h - 2} ${x + w} ${y + h}`} fill="none" stroke="#a8434c" strokeWidth=".8" />
    </g>
  );
}

function Label({ x, y, w, children }: { x: number; y: number; w?: number; children: string }) {
  return <text x={x} y={y} textLength={w} lengthAdjust="spacingAndGlyphs">{children}</text>;
}

function Canvas() {
  const dots = [461.5, 678, 895].flatMap((x) => [621.3, 654, 687].map((y) => [x, y])).filter(([x, y]) => !(x === 678 && y === 654));
  return (
    <div className="flex w-[672px] shrink-0 flex-col bg-[#fdfefd]">
      <svg viewBox="313 368 672 370" className="h-[370px] w-[672px] shrink-0 font-[Inter] italic">
        <g stroke="#8acb83" strokeWidth="1">
          <path d="M418 360H617V430L418 430z" fill="#f1f7f2" />
          <path d="M419.500 360L460 360V430H419z" fill="#e4f4e6" />
          <path d="M572 360H616.500L617 432Q594 434 573 432z" fill="#e2f3e7" />
          <path d="M420.500 360L419 428M461 360l-1 70M618.500 360L616 432M417 431Q520 426 617 431M571.500 360l1.500 70" fill="none" strokeWidth=".8" />
          <path d="M713 360H913V419H713z" fill="#f1f7f2" />
          <path d="M715 360H756V418L715 419z" fill="#e4f4e6" />
          <path d="M869 360H913V420L868 422z" fill="#e2f3e7" />
          <path d="M716 360l-2 58M757 360l-1 56M914 360l-1 61M713 418Q815 417 913 419" fill="none" strokeWidth=".8" />
          <path d="M435.500 493.500Q690 492 945.500 493.500L945.700 700.500Q690 703 435.300 700.500z" fill="#f0f7f0" />
          <path d="M437 494L435 699M435 700Q700 706 945 700.500M435 494.500Q600 491 945 493" fill="none" strokeWidth=".7" />
        </g>
        <g fill="none" stroke="#111">
          <path d="M713 374.500H664V387M618 387H700M913 377H924.500V360" strokeWidth="1" />
          <path d="M616 387l5-2.600v5.200zM702 387l-5-2.600v5.200z" fill="#111" />
        </g>
        <g fill="#151515" fontSize="12.5" textAnchor="middle">
          <Label x={438.500} y={381} w={30}>prev</Label><Label x={438.500} y={396.500} w={18}>null</Label>
          <Label x={519} y={389}>1</Label><Label x={595} y={384} w={24}>200</Label><Label x={595} y={399} w={25}>next</Label>
          <Label x={734} y={373} w={28}>prev</Label><Label x={735} y={386} w={20}>100</Label>
          <Label x={814.500} y={378}>2</Label><Label x={891} y={373.500} w={30}>3000</Label><Label x={891} y={389} w={26}>next</Label>
        </g>
        <RedBar id="r1" x={468} y={501.500} w={422} h={53} />
        <RedBar id="r2" x={467.500} y={570.500} w={422} h={54} />
        <RedBar id="r3" x={467} y={627.500} w={423} h={54} />
        <g fill="#111" stroke="#111" strokeWidth=".3" fontSize="11" textAnchor="middle">
          <Label x={680} y={533.500} w={11}>1*1</Label>
          <Label x={678.500} y={602.500} w={39}>2*1,2*2</Label>
          <Label x={679.500} y={657} w={58}>3*1,3*2,3*3</Label>
          <path d="M708.700 647V662" strokeWidth=".9" />
        </g>
        <path d="M716 669.500v10M711 674.500h10" stroke="#333" strokeWidth="1.300" strokeDasharray="2.500 1.500" />
        {dots.map(([x, y]) => <circle key={`${x}-${y}`} cx={x} cy={y} r="3.2" fill="#3f97f3" />)}
      </svg>
      <div className="mt-px ml-[223px] h-[2px] w-[191px] bg-[#e6e6e8]" />
    </div>
  );
}

function Num({ v, w = "w-[15px]", label, lw = "w-5", first }: { v: string; w?: string; label?: string; lw?: string; first?: boolean }) {
  return (
    <div className={`flex w-[40px] shrink-0 flex-col items-center ${first ? "" : "ml-[6px]"}`}>
      <div className="flex h-[14px] items-center">
        <span className="flex h-[13px] w-[33px] items-center justify-end bg-white pr-[2px]"><T className={`text-[8.5px] ${w}`}>{v}</T></span>
        <span className="ml-[2px] flex flex-col gap-[3px]"><Tri className="h-[3px] w-[5px] rotate-180" /><Tri className="h-[3px] w-[5px]" /></span>
      </div>
      {label && <T className={`mt-[1px] text-[8px] text-[#666] ${lw}`}>{label}</T>}
    </div>
  );
}

function Check({ label, w, mt, on, swatch }: { label: string; w: string; mt: string; on?: boolean; swatch?: boolean }) {
  return (
    <div className={`flex h-[10px] shrink-0 items-center ${mt}`}>
      <span className={`flex size-2 items-center justify-center rounded-[1px] border ${on ? "border-[#5b20ee] bg-[#5b20ee] text-white" : "border-[#777] bg-white"}`}>{on && <Ic className="size-2" sw={3.5} d="M3 10l5 5 9-10" />}</span>
      <T className={`ml-[4.5px] text-[8.5px] font-semibold ${w}`}>{label}</T>
      {swatch && <><i className="ml-[56px] h-2 w-[14px] bg-black" /><Pencil className="ml-[3px] size-[7px]" strokeWidth={2.5} /></>}
    </div>
  );
}

function FormatPanel() {
  const b = "flex size-[19px] shrink-0 items-center justify-center border border-[#e2e2e6] text-[9px] leading-none";
  return (
    <div className="flex min-w-0 flex-1 flex-col bg-[#f1f1f4] pl-[10px] text-[#45454a]">
      <T className="mt-[6px] ml-[60px] w-[18px] text-[9px] font-semibold">Text</T>
      <T className="mt-[16px] w-[17px] text-[8.5px] font-semibold">Font</T>
      <div className="mt-[7px] flex h-[13px] w-[136px] items-center border-b border-[#e0e0e4]"><T className="ml-[32px] w-[70px] text-[8.5px]">Architects Daughter</T><ChevronDown className="ml-[23px] size-2" /></div>
      <div className="mt-[2px] flex h-[21px] items-center">
        <span className={`${b} bg-[#e2e2e6] font-bold`}>B</span><span className={`${b} ml-[3px] bg-[#e2e2e6] font-serif font-bold italic`}>I</span><span className={`${b} ml-[3px] underline`}>U</span>
        <span className={`${b} ml-[9px]`}><Ic className="size-[10px]" sw={2} d="M11 5L2 9l9 4M8 6.500v5M16 16V4M14 6l2-2 2 2" /></span>
        <span className="ml-[5px] flex h-[13px] w-8 items-center justify-end bg-white pr-[2px]"><T className="w-[19px] text-[8.5px]">20 px</T></span>
        <span className="ml-[2px] flex flex-col gap-[3px]"><Tri className="h-[3px] w-[5px] rotate-180" /><Tri className="h-[3px] w-[5px]" /></span>
      </div>
      <div className="mt-px flex h-[21px] items-center">
        <span className={b}><Ic className="size-[11px]" sw={2} d="M2 3h16M2 7h10M2 11h16M2 15h10" /></span>
        <span className={`${b} ml-[3px] bg-[#e2e2e6]`}><Ic className="size-[11px]" sw={2} d="M2 3h16M5 7h10M2 11h16M5 15h10" /></span>
        <span className={`${b} ml-[3px]`}><Ic className="size-[11px]" sw={2} d="M2 3h16M8 7h10M2 11h16M8 15h10" /></span>
        <span className={`${b} ml-[9px]`}><Ic className="size-[11px]" sw={2} d="M3 3h14M10 17V7M7 9l3-3 3 3" /></span>
        <span className={`${b} ml-[3px] bg-[#e2e2e6]`}><Ic className="size-[11px]" sw={2} d="M3 10h14M10 1v7M8 6l2 2 2-2M10 19v-7M8 14l2-2 2 2" /></span>
        <span className={`${b} ml-[3px]`}><Ic className="size-[11px]" sw={2} d="M3 17h14M10 3v10M7 11l3 3 3-3" /></span>
      </div>
      <Check mt="mt-[11px]" label="Font Color" w="w-[39px]" on swatch />
      <Check mt="mt-[6px]" label="Background Color" w="w-[66px]" />
      <Check mt="mt-[5px]" label="Border Color" w="w-[48px]" />
      <Check mt="mt-[7px]" label="Shadow" w="w-[29px]" />
      <Check mt="mt-[9px]" label="Word Wrap" w="w-[41px]" />
      <Check mt="mt-[5px]" label="Formatted Text" w="w-[57px]" />
      <div className="mt-[11px] flex h-[14px] shrink-0 items-center"><T className="w-[29px] text-[8.5px] font-semibold">Opacity</T><span className="ml-[66px]"><Num first v="100 %" w="w-[22px]" /></span></div>
      <div className="mt-[9px] flex h-[26px] shrink-0"><T className="mt-[2px] w-[29px] text-[8.5px] font-semibold">Spacing</T><span className="ml-[20px] flex"><Num first v="0 pt" label="Top" lw="w-[13px]" /><Num v="2 pt" label="Global" lw="w-[23px]" /></span></div>
      <div className="mt-px flex shrink-0 pl-[3px]"><Num first v="0 pt" label="Left" lw="w-[14px]" /><Num v="0 pt" label="Bottom" lw="w-[27px]" /><Num v="0 pt" label="Right" lw="w-[19px]" /></div>
    </div>
  );
}

function SharedScreen() {
  return (
    <div className="flex h-[559px] w-[993px] shrink-0 flex-col overflow-hidden bg-white">
      <SharedTopBar />
      <div className="flex h-[542px]">
        <SharedDock />
        <div className="flex w-[968px] shrink-0 flex-col">
          <SharedTabs />
          <SharedAddress />
          <Bookmarks />
          <DrawioHeader />
          <div className="flex min-h-0 flex-1">
            <Sidebar />
            <div className="flex min-w-0 flex-1 flex-col">
              <div className="flex h-[373px] shrink-0">
                <Canvas />
                <div className="w-[3px] bg-[#f3f3f6] pt-[299px]"><div className="h-[25px] bg-[#dfdfe3]" /></div>
                <FormatPanel />
              </div>
              <div className="flex flex-1 items-center bg-[#f0f0f3] text-[#444]">
                <Ic className="ml-[5px] size-[10px]" sw={3.5} d="M10 3h.01M10 10h.01M10 17h.01" />
                <div className="ml-[5px] flex h-full w-12 items-center bg-[#fdfdfe]"><T className="ml-[7px] w-[25px] text-[8.5px] font-semibold">Page-1</T><ChevronDown className="ml-[4px] size-[6px] rotate-180" strokeWidth={3} /></div>
                <Plus className="ml-[5px] size-[11px]" strokeWidth={2} />
              </div>
            </div>
          </div>
        </div>
      </div>
    </div>
  );
}

/* ---------- participants ---------- */

function Mute() {
  return <span className="flex h-[19px] w-[23px] items-center justify-center rounded-[3px] bg-[#747474] text-white"><MicOff className="size-3" /></span>;
}

function Tile({ name, bg, av, speaking }: { name: string; bg: string; av: string; speaking?: boolean }) {
  return (
    <div className={`relative flex h-[70px] w-[94px] shrink-0 items-center justify-center rounded-[4px] ${speaking ? "border-2 border-[#5b5fc7]" : "border border-[#d8dcda]"} ${bg}`}>
      <span className={`flex size-[39px] items-center justify-center rounded-full text-[15px] font-medium shadow-[0_1px_3px_rgba(0,0,0,.2)] ${av}`}>{name}</span>
      {!speaking && <span className="absolute bottom-[2px] left-[2px]"><Mute /></span>}
    </div>
  );
}

function Participants() {
  return (
    <div className="ml-[29px] flex w-[190px] shrink-0 flex-col items-center pt-[32px]">
      <div className="grid grid-cols-2 gap-x-[2px] gap-y-[2px]">
        <Tile speaking name="JY" bg="bg-linear-to-br from-[#f2f5e2] to-[#f2eff2]" av="bg-[#fdeec5] text-[#6b4a00]" />
        <Tile name="M" bg="bg-linear-to-br from-[#e6f5f0] via-[#f5f0e8] to-[#f6e3df]" av="bg-[#cfe0d6] text-[#0c3b22]" />
        <Tile name="H2" bg="bg-linear-to-br from-[#e3f3ec] to-[#f4f4f8]" av="bg-[#e8ddd9] text-[#4f2c20]" />
        <Tile name="A" bg="bg-linear-to-b from-[#f3f3f2] to-[#f0e8f2]" av="bg-[#c6d4e9] text-[#0a1f57]" />
        <Tile name="BB" bg="bg-linear-to-br from-[#f5eff6] to-[#f6ece6]" av="bg-[#cfdbe0] text-[#0d2f36]" />
        <Tile name="E" bg="bg-linear-to-br from-[#f7f0e3] to-[#f5e3e2]" av="bg-[#e8dedb] text-[#4f2c20]" />
        <Tile name="AM" bg="bg-linear-to-br from-[#e0f6ec] via-[#f1efe4] to-[#e9e9f4]" av="bg-[#fbddd8] text-[#812d20]" />
        <Tile name="A" bg="bg-linear-to-br from-[#f5f4f8] via-[#f5ecf0] to-[#f3f4f0]" av="bg-[#f4d3e0] text-[#610e37]" />
      </div>
      <div className="mt-[2px]"><Tile name="M" bg="bg-linear-to-bl from-[#f7f1e0] to-[#f2f2ec]" av="bg-[#cfe0d6] text-[#0c3b22]" /></div>
      <div className="flex h-[31px] items-center"><ChevronLeft className="size-[14px] text-[#bbb]" strokeWidth={1.8} /><T className="mx-[7px] w-4 text-[12px] text-[#333]">1/2</T><ChevronRight className="size-[14px] text-[#333]" strokeWidth={1.8} /></div>
      <div className="relative flex h-[106px] w-[190px] shrink-0 items-center justify-center rounded-[4px] border border-[#d2dcda] bg-linear-to-b from-[#e2f2f2] via-[#e6f3f0] to-[#f2f4f2]">
        <span className="flex size-[52px] items-center justify-center rounded-full bg-[#cddaea] text-[21px] font-medium text-[#0f2d52]">M</span>
        <span className="absolute bottom-[5px] left-[5px]"><Mute /></span>
      </div>
    </div>
  );
}

export default function App() {
  return (
    <div className="flex h-[768px] w-[1366px] flex-col overflow-hidden bg-[#101010] font-['Noto_Sans','Open_Sans',sans-serif]">
      <SystemBar />
      <div className="flex h-[736px]">
        <DesktopDock />
        <div className="flex w-[1300px] shrink-0 flex-col bg-[#f4f4f4]">
          <FirefoxChrome />
          <TeamsHeader />
          <div className="flex min-h-0 flex-1">
            <Rail />
            <main className="relative flex w-[1246px] flex-col bg-[#f5f5f5]">
              <MeetingBar />
              <div className="flex pt-[3px] pl-[31px]">
                <SharedScreen />
                <Participants />
              </div>
              <div className="absolute top-[584px] left-[10px] flex gap-[6px] text-[11px] text-white">
                <span className="flex h-5 w-[114px] items-center rounded-[3px] bg-[#333]/65 pl-[5px]"><T className="w-[104px]">Jospheen Boles Youseef</T></span>
                <span className="flex h-5 w-[53px] items-center rounded-[3px] bg-[#333]/65"><Ic className="ml-[8px] size-[11px]" sw={1.6} d="M2 10h16" /><Plus className="ml-[14px] size-3" strokeWidth={1.8} /></span>
              </div>
            </main>
          </div>
        </div>
      </div>
    </div>
  );
}
